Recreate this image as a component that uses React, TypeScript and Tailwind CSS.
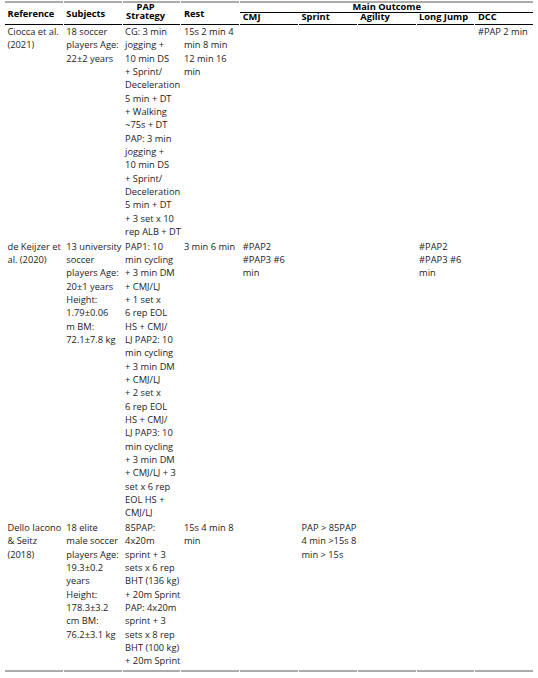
type Row = {
  ref: string[];
  subj: string[];
  pap: string[];
  rest: string[];
  cmj: string[];
  sprint: string[];
  agility: string[];
  lj: string[];
  dcc: string[];
};

const rows: Row[] = [
  {
    ref: ["Ciocca et al.", "(2021)"],
    subj: ["18 soccer", "players Age:", "22±2 years"],
    pap: [
      "CG: 3 min",
      "jogging +",
      "10 min DS",
      "+ Sprint/",
      "Deceleration",
      "5 min + DT",
      "+ Walking",
      "~75s + DT",
      "PAP: 3 min",
      "jogging +",
      "10 min DS",
      "+ Sprint/",
      "Deceleration",
      "5 min + DT",
      "+ 3 set x 10",
      "rep ALB + DT",
    ],
    rest: ["15s 2 min 4", "min 8 min", "12 min 16", "min"],
    cmj: [],
    sprint: [],
    agility: [],
    lj: [],
    dcc: ["#PAP 2 min"],
  },
  {
    ref: ["de Keijzer et", "al. (2020)"],
    subj: ["13 university", "soccer", "players Age:", "20±1 years", "Height:", "1.79±0.06", "m BM:", "72.1±7.8 kg"],
    pap: [
      "PAP1: 10",
      "min cycling",
      "+ 3 min DM",
      "+ CMJ/LJ",
      "+ 1 set x",
      "6 rep EOL",
      "HS + CMJ/",
      "LJ PAP2: 10",
      "min cycling",
      "+ 3 min DM",
      "+ CMJ/LJ",
      "+ 2 set x",
      "6 rep EOL",
      "HS + CMJ/",
      "LJ PAP3: 10",
      "min cycling",
      "+ 3 min DM",
      "+ CMJ/LJ + 3",
      "set x 6 rep",
      "EOL HS +",
      "CMJ/LJ",
    ],
    rest: ["3 min 6 min"],
    cmj: ["#PAP2", "#PAP3 #6", "min"],
    sprint: [],
    agility: [],
    lj: ["#PAP2", "#PAP3 #6", "min"],
    dcc: [],
  },
  {
    ref: ["Dello Iacono", "& Seitz", "(2018)"],
    subj: ["18 elite", "male soccer", "players Age:", "19.3±0.2", "years", "Height:", "178.3±3.2", "cm BM:", "76.2±3.1 kg"],
    pap: [
      "85PAP:",
      "4x20m",
      "sprint + 3",
      "sets x 6 rep",
      "BHT (136 kg)",
      "+ 20m Sprint",
      "PAP: 4x20m",
      "sprint + 3",
      "sets x 8 rep",
      "BHT (100 kg)",
      "+ 20m Sprint",
    ],
    rest: ["15s 4 min 8", "min"],
    cmj: [],
    sprint: ["PAP > 85PAP", "4 min >15s 8", "min > 15s"],
    agility: [],
    lj: [],
    dcc: [],
  },
];

const keys: (keyof Row)[] = ["ref", "subj", "pap", "rest", "cmj", "sprint", "agility", "lj", "dcc"];

export default function App() {
  return (
    <div className="min-h-[678px] w-[538px] bg-white pt-px pl-[5px] font-['Open_Sans',sans-serif] text-[9.3px] text-[#1c1c1c]">
      <div className="grid w-[528px] grid-cols-[repeat(9,57.8px)] gap-x-px">
        {/* header */}
        <HeadCell>Reference</HeadCell>
        <HeadCell>Subjects</HeadCell>
        <div className="row-span-2 border-t-2 border-b border-t-[#ababab] border-b-black pl-[3.5px]">
          <div className="-mt-[1.5px] inline-block text-center font-bold leading-[9.5px] text-black">
            PAP
            <br />
            Strategy
          </div>
        </div>
        <HeadCell>Rest</HeadCell>
        <div className="col-span-5 h-[12px] border-t-2 border-b border-t-[#ababab] border-b-black text-center font-bold leading-[7px] text-black">
          Main Outcome
        </div>
        {["CMJ", "Sprint", "Agility", "Long Jump", "DCC"].map((h) => (
          <div key={h} className="h-[12px] border-b border-black pl-[2.5px] font-bold leading-[8px] text-black">
            {h}
          </div>
        ))}

        {/* body */}
        {rows.map((r, ri) =>
          keys.map((k) => (
            <div
              key={ri + k}
              className={
                ri === rows.length - 1
                  ? "whitespace-nowrap border-b-2 border-[#ababab] pb-[2px] pl-[2.5px] leading-[13.33px]"
                  : "whitespace-nowrap pb-[1.5px] pl-[2.5px] leading-[13.33px]"
              }
            >
              {r[k].map((line, i) => (
                <div key={i}>{line}</div>
              ))}
            </div>
          ))
        )}
      </div>
    </div>
  );
}

function HeadCell({ children }: { children: React.ReactNode }) {
  return (
    <div className="row-span-2 flex items-center border-t-2 border-b border-t-[#ababab] border-b-black pl-[2.5px] pt-[1px] font-bold leading-[10px] text-black">
      {children}
    </div>
  );
}
